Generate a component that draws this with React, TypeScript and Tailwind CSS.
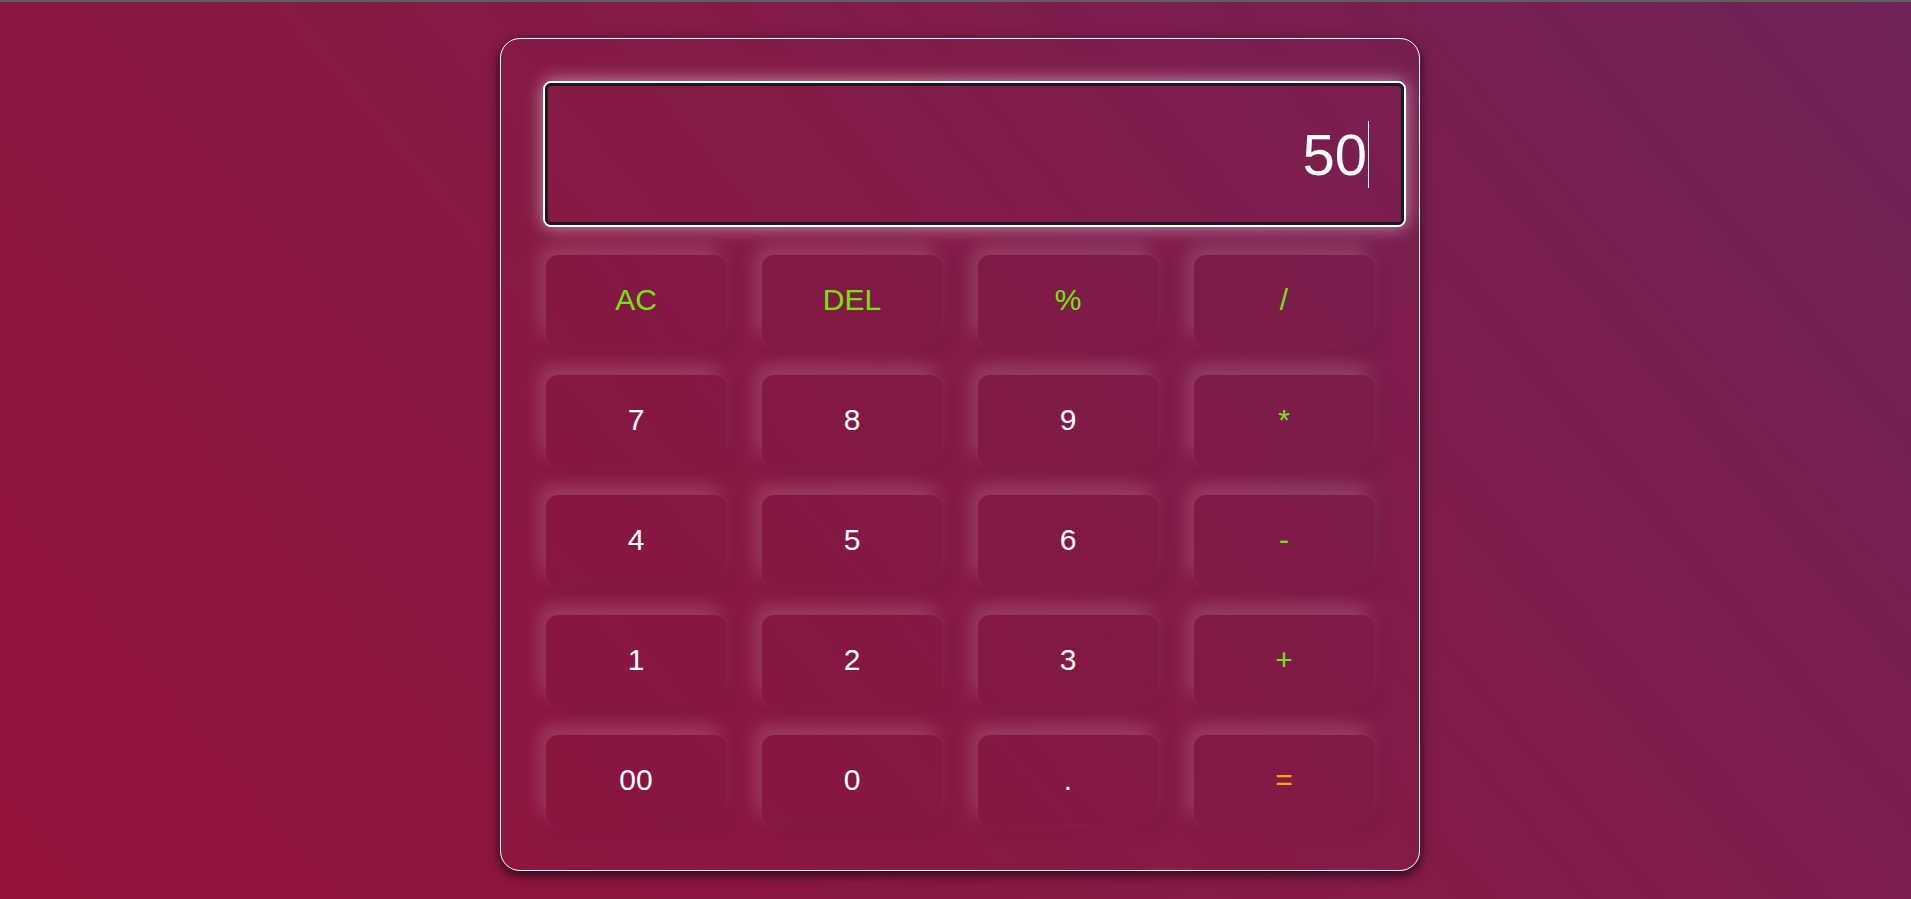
const keys: { label: string; tone: "op" | "num" | "eq" }[] = [
  { label: "AC", tone: "op" },
  { label: "DEL", tone: "op" },
  { label: "%", tone: "op" },
  { label: "/", tone: "op" },
  { label: "7", tone: "num" },
  { label: "8", tone: "num" },
  { label: "9", tone: "num" },
  { label: "*", tone: "op" },
  { label: "4", tone: "num" },
  { label: "5", tone: "num" },
  { label: "6", tone: "num" },
  { label: "-", tone: "op" },
  { label: "1", tone: "num" },
  { label: "2", tone: "num" },
  { label: "3", tone: "num" },
  { label: "+", tone: "op" },
  { label: "00", tone: "num" },
  { label: "0", tone: "num" },
  { label: ".", tone: "num" },
  { label: "=", tone: "eq" },
];

function Key({ label, tone }: { label: string; tone: "op" | "num" | "eq" }) {
  const color =
    tone === "op" ? "text-[#72e60a]" : tone === "eq" ? "text-[#ffa500]" : "text-white";
  return (
    <button
      className={`h-[90px] w-[180px] rounded-[12px] bg-black/[0.02] text-[30px] leading-none ${color} shadow-[-6px_-9px_18px_rgba(255,255,255,0.17),6px_6px_16px_rgba(0,0,0,0.08)]`}
      style={{ fontFamily: '"Liberation Sans", Arial, sans-serif' }}
    >
      {label}
    </button>
  );
}

export default function App() {
  return (
    <div className="min-h-screen w-full border-t-2 border-[#5f5f5f] bg-[linear-gradient(50deg,#93123a,#851a47_50%,#702256)] pt-[36px] pl-[500px]">
      <div className="h-[833px] w-[920px] rounded-[20px] border border-white pt-[42px] pl-[42px] shadow-[0_4px_12px_rgba(0,0,0,0.7)]">
        <div className="h-[146px] w-[863px] rounded-[8px] border-2 border-white shadow-[0_0_18px_rgba(255,255,255,0.55)]">
          <div className="flex h-full w-full items-center justify-end rounded-[6px] border-[3px] border-[#1a1a1a] pr-[32px]">
            <span
              className="text-[58px] leading-[67px] text-white"
              style={{ fontFamily: '"Liberation Sans", Arial, sans-serif' }}
            >
              50
            </span>
            <span className="ml-[1px] h-[67px] w-px bg-white" />
          </div>
        </div>
        <div className="mt-[28px] ml-[3px] grid grid-cols-[repeat(4,180px)] gap-x-[36px] gap-y-[30px]">
          {keys.map((k) => (
            <Key key={k.label} label={k.label} tone={k.tone} />
          ))}
        </div>
      </div>
    </div>
  );
}
